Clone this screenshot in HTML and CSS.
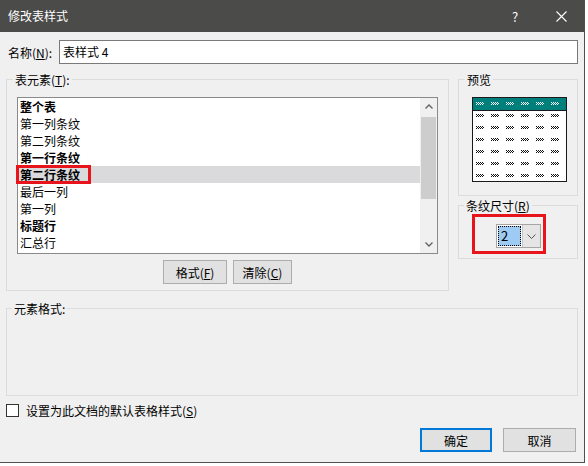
FILE: index.html
```html
<!DOCTYPE html>
<html lang="zh-CN">
<head>
    <meta charset="UTF-8">
    <meta name="viewport" content="width=device-width, initial-scale=1.0">
    <title>修改表样式</title>
    <link rel="stylesheet" href="styles.css">
</head>
<body>
    <div class="dialog">
        <div class="titlebar">
            <span class="title">修改表样式</span>
            <span class="tb-btn">?</span>
            <span class="tb-btn">
                <svg width="11" height="11" viewBox="0 0 11 11"><path d="M0.5 0.5L10.5 10.5M10.5 0.5L0.5 10.5" stroke="#fff" stroke-width="1.1"/></svg>
            </span>
        </div>

        <div class="content">
            <div class="name-row">
                <label class="name-label">名称(<u>N</u>):</label>
                <div class="textbox">表样式 4</div>
            </div>

            <div class="main-row">
                <div class="group elements">
                    <div class="caption">表元素(<u>T</u>):</div>
                    <div class="listbox">
                        <ul class="items">
                            <li class="b">整个表</li>
                            <li>第一列条纹</li>
                            <li>第二列条纹</li>
                            <li class="b">第一行条纹</li>
                            <li class="b sel"><span class="mark"></span>第二行条纹</li>
                            <li>最后一列</li>
                            <li>第一列</li>
                            <li class="b">标题行</li>
                            <li>汇总行</li>
                        </ul>
                        <div class="scrollbar">
                            <div class="arrow">
                                <svg width="8" height="5" viewBox="0 0 8 5"><path d="M0.5 4.5L4 1L7.5 4.5" fill="none" stroke="#606060" stroke-width="1.3"/></svg>
                            </div>
                            <div class="track"><div class="thumb"></div></div>
                            <div class="arrow">
                                <svg width="8" height="5" viewBox="0 0 8 5"><path d="M0.5 0.5L4 4L7.5 0.5" fill="none" stroke="#606060" stroke-width="1.3"/></svg>
                            </div>
                        </div>
                    </div>
                    <div class="btn-row">
                        <button class="btn fmt">格式(<u>F</u>)</button>
                        <button class="btn clr">清除(<u>C</u>)</button>
                    </div>
                </div>

                <div class="side">
                    <div class="group preview">
                        <div class="caption">预览</div>
                        <!-- sample table: teal header row + six body rows, each cell a small dotted squiggle -->
                        <svg class="sample" width="95" height="85" viewBox="0 0 95 85" shape-rendering="crispEdges">
                            <defs>
                                <pattern id="dark" x="4" y="17" width="15" height="12" patternUnits="userSpaceOnUse">
                                    <path d="M0 0h1v1h-1zM2 0h1v1h-1zM4 0h1v1h-1zM6 0h1v1h-1zM1 1h1v1h-1zM3 1h1v1h-1zM5 1h1v1h-1zM7 1h1v1h-1zM0 2h1v1h-1zM2 2h1v1h-1zM4 2h1v1h-1zM6 2h1v1h-1z" fill="#111"/>
                                </pattern>
                                <pattern id="light" x="4" y="5" width="15" height="12" patternUnits="userSpaceOnUse">
                                    <path d="M0 0h1v1h-1zM2 0h1v1h-1zM4 0h1v1h-1zM6 0h1v1h-1zM1 1h1v1h-1zM3 1h1v1h-1zM5 1h1v1h-1zM7 1h1v1h-1zM0 2h1v1h-1zM2 2h1v1h-1zM4 2h1v1h-1zM6 2h1v1h-1z" fill="#fff"/>
                                </pattern>
                            </defs>
                            <rect x="0.5" y="0.5" width="94" height="84" fill="#fff" stroke="#1a1a1a"/>
                            <rect x="1" y="1" width="93" height="12" fill="#00807c"/>
                            <rect x="1" y="1" width="93" height="12" fill="url(#light)"/>
                            <rect x="1" y="13" width="93" height="71" fill="url(#dark)"/>
                            <line x1="1" y1="13.5" x2="94" y2="13.5" stroke="#1a1a1a"/>
                        </svg>
                    </div>
                    <div class="group stripe">
                        <div class="caption">条纹尺寸(<u>R</u>)</div>
                        <div class="highlight">
                            <div class="spinner">
                                <div class="spin-value"><span class="focus">2</span></div>
                                <div class="spin-btn">
                                    <svg width="9" height="5" viewBox="0 0 9 5"><path d="M0.5 0.5L4.5 4.5L8.5 0.5" fill="none" stroke="#555" stroke-width="1"/></svg>
                                </div>
                            </div>
                        </div>
                    </div>
                </div>
            </div>

            <div class="group format">
                <div class="caption">元素格式:</div>
            </div>

            <div class="check-row">
                <span class="checkbox"></span>
                <span>设置为此文档的默认表格样式(<u>S</u>)</span>
            </div>

            <div class="footer">
                <button class="btn ok">确定</button>
                <button class="btn cancel">取消</button>
            </div>
        </div>
    </div>
</body>
</html>
```

FILE: styles.css
```css
body {
    margin: 0;
    background-color: #fff;
    font-family: "Noto Sans CJK SC", "Noto Sans", sans-serif;
    font-size: 12px;
    color: #000;
}
u {
    text-decoration-thickness: 1px;
    text-underline-offset: 1px;
}
.dialog {
    width: 584px;
    height: 462px;
    background-color: #f0f0f0;
    border-right: 1px solid #505050;
    border-bottom: 1px solid #505050;
}
.titlebar {
    height: 32px;
    background-color: #4b4b49;
    color: #fff;
    display: flex;
    align-items: center;
}
.title {
    flex: 1;
    padding-left: 8px;
    line-height: 16px;
}
.tb-btn {
    width: 46px;
    height: 32px;
    display: flex;
    justify-content: center;
    align-items: center;
    font-size: 13px;
}
.content {
    padding: 0 6px;
}
.name-row {
    display: flex;
    align-items: center;
    margin-top: 8px;
    height: 24px;
}
.name-label {
    width: 53px;
    padding-left: 2px;
    box-sizing: border-box;
}
.textbox {
    flex: 1;
    height: 24px;
    box-sizing: border-box;
    border: 1px solid #7a7a7a;
    background-color: #fff;
    padding-left: 3px;
    line-height: 22px;
}
.main-row {
    display: flex;
    gap: 9px;
    margin-top: 15px;
    align-items: flex-start;
}
.group {
    border: 1px solid #dcdcdc;
}
.caption {
    width: fit-content;
    margin-top: -8px;
    padding: 0 2px;
    line-height: 16px;
    background-color: #f0f0f0;
}
.elements {
    width: 443px;
    box-sizing: border-box;
    padding-bottom: 6px;
}
.elements .caption {
    margin-left: 6px;
}
.listbox {
    margin: 9px 0 0 10px;
    width: 421px;
    height: 157px;
    box-sizing: border-box;
    border: 1px solid #8a8a8a;
    background-color: #fff;
    display: flex;
}
.items {
    flex: 1;
    list-style: none;
    margin: 0;
    padding: 0;
}
.items li {
    height: 17px;
    line-height: 17px;
    padding-left: 2px;
    position: relative;
}
.items li.b {
    font-weight: bold;
}
.items li.sel {
    background-color: #dadadd;
}
.mark {
    position: absolute;
    left: -2px;
    top: -1px;
    width: 75px;
    height: 19px;
    box-sizing: border-box;
    border: 3px solid #e8141c;
}
.scrollbar {
    width: 17px;
    background-color: #f0f0f0;
    display: flex;
    flex-direction: column;
}
.arrow {
    height: 17px;
    display: flex;
    justify-content: center;
    align-items: center;
}
.track {
    flex: 1;
}
.thumb {
    margin: 2px 1px 0;
    height: 82px;
    background-color: #cdcdcd;
}
.btn-row {
    display: flex;
    justify-content: center;
    gap: 6px;
    margin-top: 6px;
}
.btn {
    height: 24px;
    box-sizing: border-box;
    border: 1px solid #adadad;
    background-color: #e1e1e1;
    font-family: inherit;
    font-size: 12px;
    color: #000;
    padding: 0;
}
.fmt {
    width: 64px;
}
.clr {
    width: 59px;
}
.side {
    width: 120px;
}
.preview {
    padding-bottom: 13px;
}
.preview .caption {
    margin-left: 6px;
}
.sample {
    display: block;
    margin: 9px 0 0 13px;
}
.stripe {
    margin-top: 9px;
    padding-bottom: 4px;
}
.stripe .caption {
    margin-left: 5px;
}
.highlight {
    margin-left: 13px;
    width: 74px;
    height: 40px;
    box-sizing: border-box;
    border: 3px solid #e8141c;
    padding: 7px 2px 0 21px;
}
.spinner {
    width: 45px;
    height: 24px;
    box-sizing: border-box;
    border: 1px solid #a5a5a5;
    background-color: #fff;
    display: flex;
}
.spin-value {
    width: 25px;
    padding: 1px;
    box-sizing: border-box;
}
.focus {
    display: block;
    height: 100%;
    box-sizing: border-box;
    border: 1px dotted #000;
    background-color: #9ecbf3;
    line-height: 18px;
    padding-left: 2px;
    font-size: 13px;
}
.spin-btn {
    flex: 1;
    background-color: #e5e5e5;
    border-left: 1px solid #c8c8c8;
    display: flex;
    justify-content: center;
    align-items: center;
}
.format {
    margin-top: 17px;
    height: 88px;
    box-sizing: border-box;
}
.format .caption {
    margin-left: 5px;
}
.check-row {
    display: flex;
    align-items: center;
    gap: 7px;
    margin-top: 8px;
    height: 13px;
    line-height: 16px;
}
.checkbox {
    width: 13px;
    height: 13px;
    box-sizing: border-box;
    border: 1px solid #333;
    background-color: #fff;
}
.footer {
    display: flex;
    justify-content: flex-end;
    gap: 11px;
    margin-top: 11px;
    padding-right: 2px;
}
.ok {
    width: 72px;
    border: 2px solid #0078d7;
}
.cancel {
    width: 73px;
}
```
